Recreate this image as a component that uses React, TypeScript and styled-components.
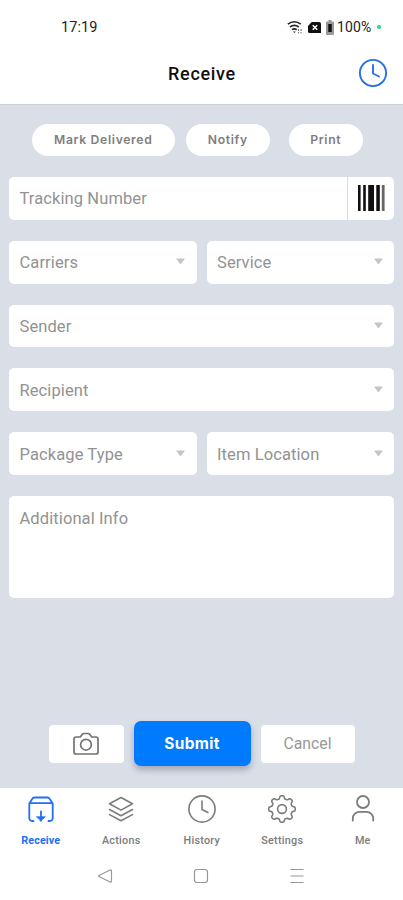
import React from "react";
import styled, { createGlobalStyle } from "styled-components";

const Global = createGlobalStyle`
  * { box-sizing: border-box; }
  body { margin: 0; background: #fff; font-family: Roboto, "Liberation Sans", sans-serif; }
  button { font: inherit; border: 0; padding: 0; background: none; }
  svg { display: block; flex: none; }
`;

const Screen = styled.div`
  width: 403px;
  height: 900px;
  display: flex;
  flex-direction: column;
  overflow: hidden;
  background: #fff;
`;

const StatusBar = styled.div`
  height: 54px;
  padding: 0 22px 0 61px;
  display: flex;
  align-items: center;
  justify-content: space-between;
  font-size: 14px;
  color: #222;
`;

const Time = styled.span`
  font-size: 14.5px;
  letter-spacing: 0.1px;
`;

const StatusIcons = styled.div`
  display: flex;
  align-items: center;
`;

const Percent = styled.span`
  margin-left: 3px;
  width: 35px;
  letter-spacing: 0.1px;
`;

const Dot = styled.i`
  width: 4px;
  height: 4px;
  margin-left: 5px;
  border-radius: 50%;
  background: #2bd584;
`;

const Header = styled.header`
  height: 51px;
  display: grid;
  grid-template-columns: 1fr auto 1fr;
  padding: 0 15.5px 12px;
  align-items: center;
  border-bottom: 1px solid #cbd0d6;

  > svg { justify-self: end; }
`;

const Title = styled.h1`
  grid-column: 2;
  margin: 1px 0 0 1px;
  font-size: 18px;
  font-weight: 500;
  letter-spacing: 0.68px;
  line-height: 22px;
  color: #111;
`;

const Content = styled.main`
  height: 683px;
  padding: 19px 9px 0;
  background: #dadee7;
  display: flex;
  flex-direction: column;
`;

const Pills = styled.div`
  display: flex;
  height: 32px;
  margin: 0 0 21px 23px;
`;

const Pill = styled.button<{ $w: number; $gap?: number }>`
  width: ${(p) => p.$w}px;
  margin-right: ${(p) => p.$gap ?? 0}px;
  border-radius: 16px;
  background: #fff;
  color: #7e7e7e;
  font-family: Inter, sans-serif;
  font-size: 12.2px;
  font-weight: 600;
  letter-spacing: 0.66px;
  line-height: 30px;
  padding-bottom: 1px;
`;

const Form = styled.div`
  display: flex;
  flex-direction: column;
  gap: 21px;
`;

const Row = styled.div`
  display: flex;
  gap: 10px;
  height: 42.8px;
`;

const Field = styled.div`
  flex: 1;
  background: #fff;
  border-radius: 5px;
  padding: 0 10.5px 0 10.5px;
  display: flex;
  align-items: center;
  justify-content: space-between;
  color: #929292;
  font-size: 16.5px;
  letter-spacing: 0.1px;
`;

const Label = styled.span`
  padding-top: 1px;
`;

const Tracking = styled(Field)`
  padding-right: 0;
`;

const Scan = styled.button`
  width: 47px;
  height: 100%;
  border-left: 1px solid #dedede;
  display: flex;
  align-items: center;
  justify-content: center;
`;

const InfoArea = styled(Field)`
  flex: none;
  height: 102px;
  align-items: flex-start;
  padding-top: 12px;
  line-height: 19px;
`;

const Footer = styled.div`
  margin: auto 0 22px;
  display: flex;
  align-items: center;
  gap: 10px;
  padding-left: 40px;
`;

const Action = styled.button<{ $w: number }>`
  width: ${(p) => p.$w}px;
  height: 38px;
  border-radius: 4px;
  background: #fff;
  display: flex;
  align-items: center;
  justify-content: center;
  color: #999;
  font-size: 15.8px;
  letter-spacing: 0;
`;

const Submit = styled(Action)`
  height: 45px;
  border-radius: 7px;
  background: #007aff;
  color: #fff;
  font-family: Inter, sans-serif;
  font-size: 15.4px;
  font-weight: 700;
  letter-spacing: 0.38px;
  box-shadow: 0 4px 6px rgba(60, 70, 90, 0.35);
  padding-bottom: 1px;
`;

const Tabs = styled.nav`
  display: grid;
  grid-template-columns: repeat(5, 80.5px);
  height: 64px;
  padding: 6px 0 0 0.5px;
`;

const Tab = styled.button<{ $active?: boolean }>`
  display: flex;
  flex-direction: column;
  align-items: center;
  gap: 10px;
  color: ${(p) => (p.$active ? "#216ff2" : "#7c7c7c")};
  font-size: 10.8px;
  font-weight: ${(p) => (p.$active ? 700 : 500)};
  letter-spacing: ${(p) => (p.$active ? "0.1px" : "0.25px")};
  line-height: 14px;
`;

const SystemNav = styled.div`
  display: grid;
  grid-template-columns: repeat(3, 96px);
  justify-content: center;
  justify-items: center;
  align-items: center;
  height: 48px;
  padding-right: 2px;
`;

const stroke = {
  fill: "none",
  stroke: "currentColor",
  strokeWidth: 1.6,
  strokeLinecap: "round",
  strokeLinejoin: "round",
} as const;

const Clock = ({ color }: { color?: string }) => (
  <svg width="30" height="30" viewBox="0 0 30 30" {...stroke} stroke={color ?? "currentColor"} strokeWidth={color ? 1.9 : 1.6}>
    <circle cx="15" cy="15" r="13.1" />
    <path d="M15 7v8.5l6 3" />
  </svg>
);

const gearPath = (() => {
  const points: string[] = [];
  for (let i = 0; i < 144; i++) {
    const a = (i / 144) * Math.PI * 2;
    const wave = Math.cos(8 * a);
    const r = 11.8 + 1.5 * Math.tanh(wave * 2.2);
    points.push(`${(15 + r * Math.sin(a)).toFixed(2)} ${(15 - r * Math.cos(a)).toFixed(2)}`);
  }
  return `M${points.join("L")}Z`;
})();

const Gear = () => (
  <svg width="30" height="30" viewBox="0 0 30 30" {...stroke}>
    <path d={gearPath} />
    <circle cx="15" cy="15" r="4.4" />
  </svg>
);

const Inbox = () => (
  <svg width="30" height="30" viewBox="0 0 30 30" {...stroke} strokeWidth={1.8}>
    <path d="M7.5 27H6a2.7 2.7 0 0 1-2.7-2.7V9.5L6.4 4.7Q7 3.5 8.5 3.5h13q1.5 0 2.1 1.2l3.1 4.8v14.8A2.7 2.7 0 0 1 24 27h-1.5M3.5 9.2h23" />
    <path d="M15 17.5v9" />
    <path d="M10.8 22.8h8.4L15 26.8Z" fill="currentColor" strokeWidth={0.8} />
  </svg>
);

const Layers = () => (
  <svg width="30" height="30" viewBox="0 0 30 30" {...stroke}>
    <path d="M15 3.5 26.5 9.8 15 16.1 3.5 9.8ZM3.5 15.5 15 21.7l11.5-6.2M3.5 20.6 15 26.8l11.5-6.2" />
  </svg>
);

const Person = () => (
  <svg width="30" height="30" viewBox="0 0 30 30" {...stroke} strokeWidth={1.8}>
    <circle cx="15" cy="8" r="6" />
    <path d="M4.8 26.5v-2.2a6.5 6.5 0 0 1 6.5-6.4h7.4a6.5 6.5 0 0 1 6.5 6.4v2.2" />
  </svg>
);

const Camera = () => (
  <svg width="26" height="24" viewBox="0 0 26 24" {...stroke} stroke="#737373" strokeWidth={1.7}>
    <path d="M3 5h4.3l1.8-2.5Q9.8 1.5 11 1.5h4q1.2 0 1.9 1L18.7 5H23q2 0 2 2v13q0 2-2 2H3q-2 0-2-2V7q0-2 2-2Z" />
    <circle cx="13" cy="12.7" r="5.4" />
  </svg>
);

const Caret = () => (
  <svg width="11" height="8" viewBox="0 0 11 8">
    <path d="M1 .5h9L5.5 6.5Z" fill="#c6c6c6" />
  </svg>
);

const Barcode = () => (
  <svg width="27" height="26" viewBox="0 0 27 26">
    <path d="M0 0h2.6v26H0ZM5.2 0h2.6v26H5.2ZM10.2 0h5.8v26h-5.8ZM18.3 0h3.5v26h-3.5Z" fill="#101010" />
    <path d="M23.8 0h2.8v26h-2.8Z" fill="#666" />
  </svg>
);

const Wifi = () => (
  <svg width="16" height="14" viewBox="0 0 16 14" fill="none" stroke="#222" strokeWidth="1.6">
    <path d="M.8 4.2q6.5-5 13 0M3 7q4.4-3.2 8.8 0M5 9.7q2.4-1.7 4.8 0" />
    <path d="M6 11.5h2.8l-1.4 1.6Z" fill="#222" stroke="none" />
    <path d="M11.5 9v2M14 9v2M11.5 12v1.2M14 12v1.2" stroke="#777" strokeWidth="1.1" />
  </svg>
);

const SimCard = () => (
  <svg width="13" height="11" viewBox="0 0 13 11">
    <path d="M3.7 0H11q2 0 2 2v9H1.5Q0 11 0 9.5V4Z" fill="#111" />
    <path d="m4.7 3.2 4.5 4.5m0-4.5L4.7 7.7" stroke="#fff" strokeWidth="1.4" />
  </svg>
);

const Battery = () => (
  <svg width="8" height="15" viewBox="0 0 8 15">
    <path d="M2.5 0h3v1.5H7q1 0 1 1V14q0 1-1 1H1q-1 0-1-1V2.5q0-1 1-1h1.5Z" fill="#999" />
    <path d="M2.3 4h3.4v8H2.3Z" fill="#111" />
  </svg>
);

const Select = ({ label }: { label: string }) => (
  <Field>
    <Label>{label}</Label>
    <Caret />
  </Field>
);

const tabs = [
  { label: "Receive", icon: <Inbox /> },
  { label: "Actions", icon: <Layers /> },
  { label: "History", icon: <Clock /> },
  { label: "Settings", icon: <Gear /> },
  { label: "Me", icon: <Person /> },
];

const StatusGap = styled.span`
  width: 5px;
`;

export default function App() {
  return (
    <Screen>
      <Global />
      <StatusBar>
        <Time>17:19</Time>
        <StatusIcons>
          <Wifi />
          <StatusGap />
          <SimCard />
          <StatusGap />
          <Battery />
          <Percent>100%</Percent>
          <Dot />
        </StatusIcons>
      </StatusBar>
      <Header>
        <Title>Receive</Title>
        <Clock color="#2870e8" />
      </Header>
      <Content>
        <Pills>
          <Pill $w={142.5} $gap={11.5}>Mark Delivered</Pill>
          <Pill $w={83.5} $gap={19}>Notify</Pill>
          <Pill $w={74.5}>Print</Pill>
        </Pills>
        <Form>
          <Row>
            <Tracking>
              <Label>Tracking Number</Label>
              <Scan aria-label="Scan barcode"><Barcode /></Scan>
            </Tracking>
          </Row>
          <Row><Select label="Carriers" /><Select label="Service" /></Row>
          <Row><Select label="Sender" /></Row>
          <Row><Select label="Recipient" /></Row>
          <Row><Select label="Package Type" /><Select label="Item Location" /></Row>
          <InfoArea><Label>Additional Info</Label></InfoArea>
        </Form>
        <Footer>
          <Action $w={74.5} aria-label="Take photo"><Camera /></Action>
          <Submit $w={117}>Submit</Submit>
          <Action $w={94}>Cancel</Action>
        </Footer>
      </Content>
      <Tabs>
        {tabs.map((tab, i) => (
          <Tab key={tab.label} $active={i === 0}>
            {tab.icon}
            {tab.label}
          </Tab>
        ))}
      </Tabs>
      <SystemNav>
        <svg width="16" height="16" viewBox="0 0 16 16" fill="none" stroke="#999" strokeWidth="1.2">
          <path d="M13 2 2 7.5q-1 .5 0 1L13 14q1.5.6 1.5-1V3q0-1.6-1.5-1Z" />
        </svg>
        <svg width="16" height="16" viewBox="0 0 16 16" fill="none" stroke="#999" strokeWidth="1.2">
          <rect x="1.5" y="1.5" width="13" height="13" rx="2.5" />
        </svg>
        <svg width="16" height="16" viewBox="0 0 16 16" fill="none" stroke="#999" strokeWidth="1.2">
          <path d="M1.5 1.5h13M1.5 8h13M1.5 14.5h13" />
        </svg>
      </SystemNav>
    </Screen>
  );
}
